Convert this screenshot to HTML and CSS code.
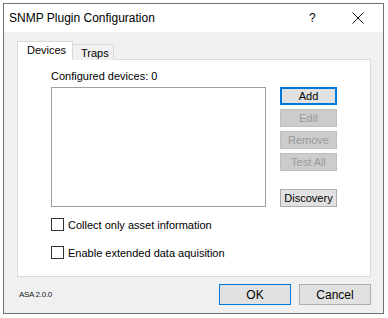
FILE: index.html
```html
<!DOCTYPE html>
<html>
<head>
<meta charset="utf-8">
<link rel="stylesheet" href="styles.css">
</head>
<body>
<div class="window">
  <div class="titlebar">
    <span class="title">SNMP Plugin Configuration</span>
    <span class="help">?</span>
    <span class="close">
      <svg width="12" height="12" viewBox="0 0 12 12"><path d="M0.5 0.5 L11.5 11.5 M11.5 0.5 L0.5 11.5" stroke="#111" stroke-width="1" fill="none"/></svg>
    </span>
  </div>
  <div class="body">
    <div class="tabs">
      <div class="tab active">Devices</div>
      <div class="tab">Traps</div>
    </div>
    <div class="panel">
      <div class="label">Configured devices: 0</div>
      <div class="main">
        <div class="listbox"></div>
        <div class="side">
          <div class="btn default">Add</div>
          <div class="btn disabled">Edit</div>
          <div class="btn disabled">Remove</div>
          <div class="btn disabled">Test All</div>
          <div class="btn normal discovery">Discovery</div>
        </div>
      </div>
      <label class="check"><span class="box"></span>Collect only asset information</label>
      <label class="check second"><span class="box"></span>Enable extended data aquisition</label>
    </div>
    <div class="footer">
      <span class="version">ASA 2.0.0</span>
      <div class="btn big ok">OK</div>
      <div class="btn big normal cancel">Cancel</div>
    </div>
  </div>
</div>
</body>
</html>
```

FILE: styles.css
```css
* { box-sizing: border-box; }
html, body { margin: 0; padding: 0; background: #ffffff; }
body {
  font-family: "Liberation Sans", Arial, sans-serif;
  font-size: 11px;
  color: #000;
  width: 388px;
  height: 318px;
  overflow: hidden;
}
.window {
  margin: 3px 0 0 3px;
  width: 381px;
  height: 311px;
  border: 1px solid #707070;
  background: #f0f0f0;
  display: flex;
  flex-direction: column;
}
.titlebar {
  height: 28px;
  background: #ffffff;
  display: flex;
  align-items: center;
  padding-left: 5px;
  font-size: 12px;
}
.title { flex: 1; }
.help { width: 14px; margin-right: 29px; font-size: 12px; }
.close { width: 12px; height: 12px; margin-right: 19px; display: flex; }
.body {
  flex: 1;
  display: flex;
  flex-direction: column;
  padding: 9px 12px 0 13px;
}
.tabs {
  display: flex;
  align-items: flex-end;
  height: 19px;
  position: relative;
  z-index: 1;
}
.tab {
  height: 16px;
  padding: 0 8px;
  border: 1px solid #d9d9d9;
  border-bottom: none;
  background: #f0f0f0;
  line-height: 15px;
}
.tab.active {
  height: 19px;
  width: 56px;
  background: #ffffff;
  padding-left: 9px;
  line-height: 17px;
}
.tab + .tab { border-left: none; width: 41px; padding-left: 8px; line-height: 17px; }
.panel {
  margin-top: -1px;
  width: 354px;
  height: 218px;
  background: #ffffff;
  border: 1px solid #d9d9d9;
  padding: 10px 0 0 33px;
}
.label { height: 17px; line-height: 13px; }
.main {
  display: flex;
  gap: 14px;
  height: 130px;
}
.listbox {
  width: 215px;
  height: 120px;
  border: 1px solid #a0a0a0;
  background: #fff;
}
.side {
  display: flex;
  flex-direction: column;
  gap: 4px;
}
.btn {
  width: 57px;
  height: 18px;
  display: flex;
  align-items: center;
  justify-content: center;
  font-size: 11px;
}
.btn.default {
  border: 2px solid #0078d7;
  background: #e1e1e1;
}
.btn.disabled {
  border: 1px solid #bfbfbf;
  background: #cccccc;
  color: #9a9a9a;
}
.btn.normal {
  border: 1px solid #adadad;
  background: #e1e1e1;
}
.btn.discovery { margin-top: 14px; }
.check {
  display: flex;
  align-items: center;
  height: 13px;
  margin-top: 1px;
  white-space: nowrap;
}
.check.second { margin-top: 15px; }
.box {
  width: 13px;
  height: 13px;
  border: 1px solid #333333;
  background: #fff;
  margin-right: 4px;
  flex: none;
}
.footer {
  display: flex;
  align-items: center;
  margin-top: 7px;
  height: 21px;
  padding-left: 2px;
}
.version {
  font-size: 8px;
  letter-spacing: -0.3px;
  flex: 1;
  color: #222;
}
.btn.big {
  width: 72px;
  height: 21px;
  font-size: 12px;
}
.btn.ok {
  border: 1px solid #0078d7;
  background: #e1e1e1;
  margin-right: 8px;
}
.btn.cancel { margin-right: 0; }
```
